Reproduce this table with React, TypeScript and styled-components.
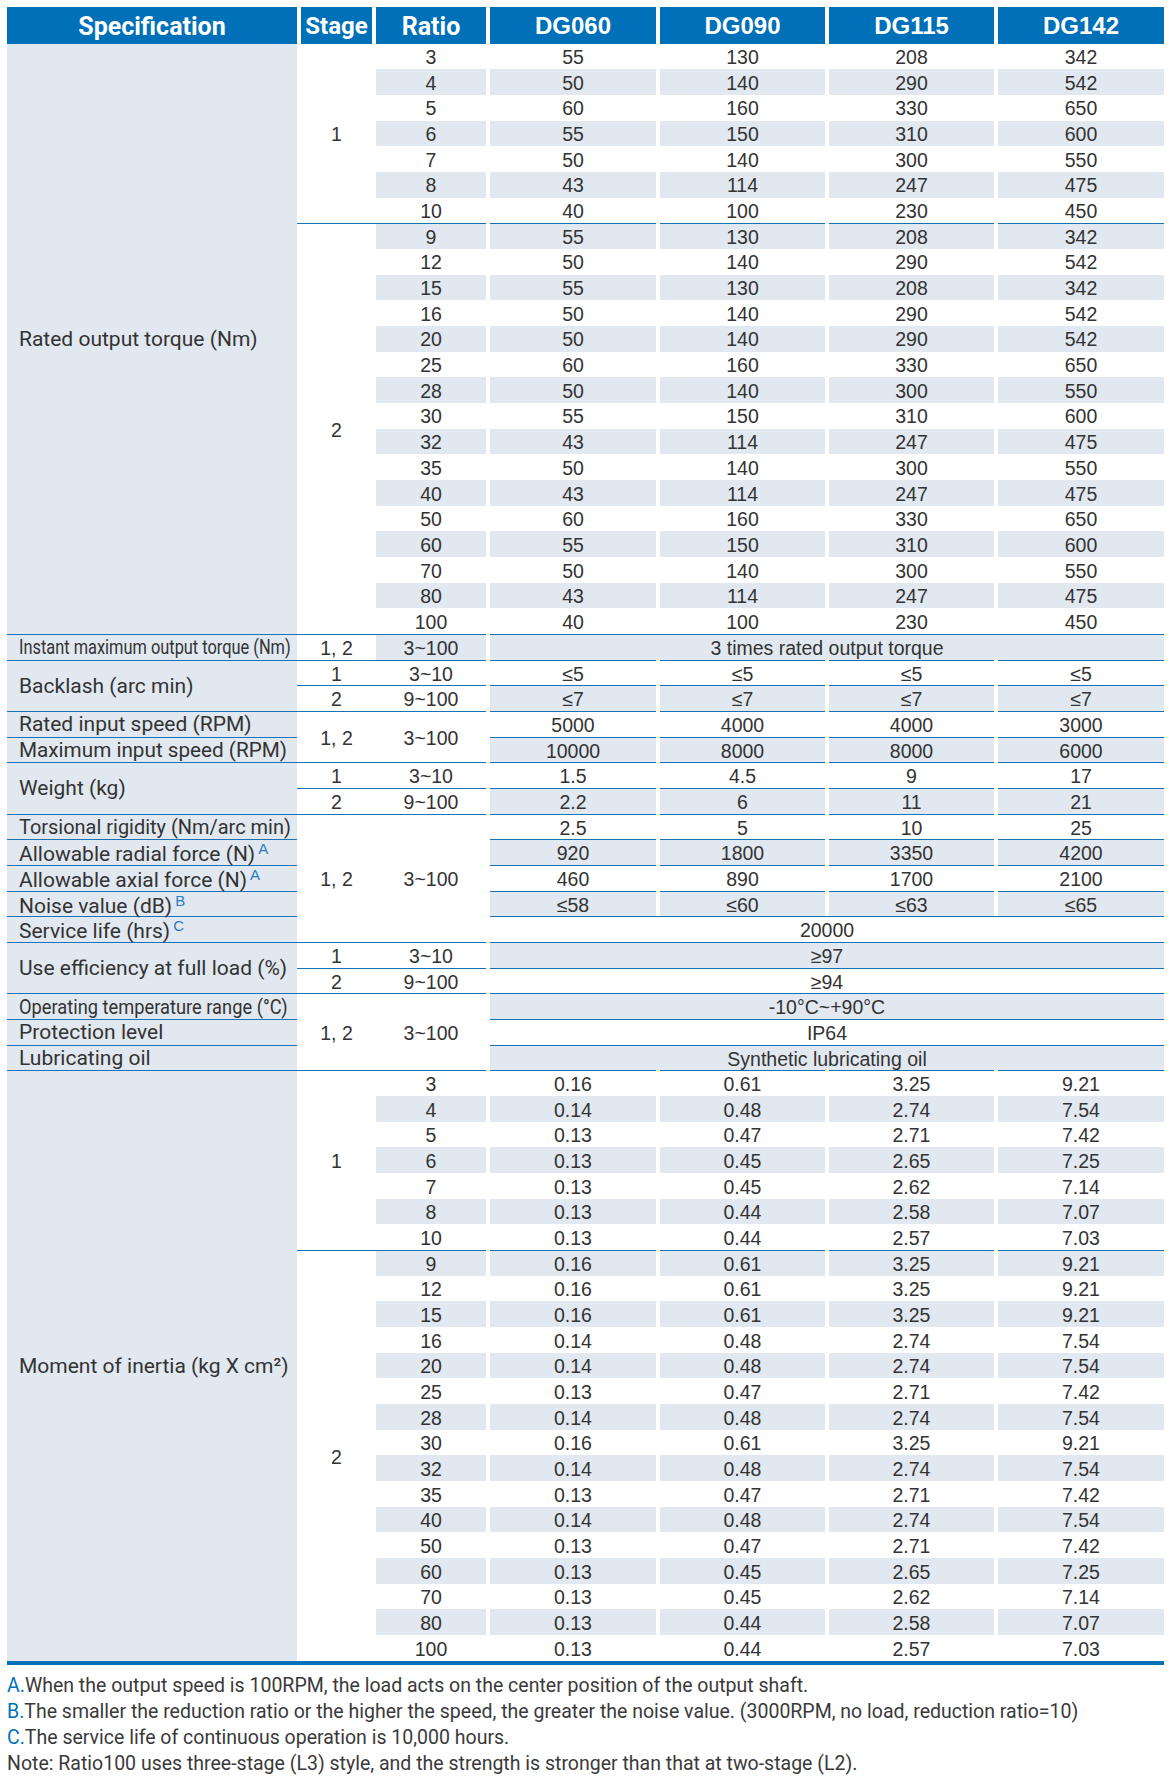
import React from "react";
import styled, { createGlobalStyle } from "styled-components";

const BLUE = "#0070b8";
const LINE = "#1a72b6";
const GREY = "#e1e8ef";
const INK = "#333333";
const SANS = 'Roboto, "Noto Sans", sans-serif';
const ARIAL = '"Liberation Sans", Arial, sans-serif';

const GlobalStyle = createGlobalStyle`
  body {
    margin: 0;
    background: #ffffff;
  }
`;

const Page = styled.div`
  width: 1174px;
  box-sizing: border-box;
  padding: 7px 10px 24px 7px;
`;

const Sheet = styled.div`
  display: grid;
  width: 1157px;
  grid-template-columns: 290px 4px 71px 4px 110px 4px 166px 4px 165px 4px 165px 4px 166px;
  grid-template-rows: 36.5px repeat(63, 25.68px);
`;

const HeadCell = styled.div<{ $col: string; $model?: boolean; $size?: number }>`
  grid-column: ${(p) => p.$col};
  grid-row: 1;
  background: ${BLUE};
  color: #ffffff;
  display: flex;
  align-items: center;
  justify-content: center;
  padding-top: 2px;
  font-family: ${(p) => (p.$model ? ARIAL : SANS)};
  font-weight: 700;
  font-size: ${(p) => p.$size || 24}px;
`;

interface CellProps {
  $col: string;
  $row: number;
  $span?: number;
  $top?: boolean;
  $fill?: boolean;
}

const Cell = styled.div<CellProps>`
  grid-column: ${(p) => p.$col};
  grid-row: ${(p) => `${p.$row + 2} / span ${p.$span || 1}`};
  box-sizing: border-box;
  display: flex;
  align-items: center;
  justify-content: center;
  padding-top: 3px;
  background: ${(p) => (p.$fill ? GREY : "transparent")};
  border-top: ${(p) => (p.$top ? `1px solid ${LINE}` : "none")};
  color: ${INK};
  font-family: ${ARIAL};
  font-size: 19.5px;
  line-height: 1;
  white-space: nowrap;
`;

const SpecCell = styled(Cell)`
  justify-content: flex-start;
  padding-top: 1px;
  padding-left: 12px;
  font-family: ${SANS};
  font-size: 21px;
  background: ${GREY};
`;

const Label = styled.span<{ $squeeze?: number }>`
  display: inline-block;
  transform: scaleX(${(p) => p.$squeeze || 1});
  transform-origin: left center;
`;

const Sup = styled.sup`
  color: #2b7cc3;
  font-family: ${ARIAL};
  font-size: 15px;
  margin-left: 3px;
  vertical-align: 7px;
`;

const BottomRule = styled.div`
  width: 1157px;
  height: 4px;
  background: ${BLUE};
`;

const Notes = styled.div`
  margin-top: 8px;
  font-family: ${SANS};
  font-size: 19.5px;
  line-height: 26px;
  color: #3a3a3a;
`;

const Mark = styled.span`
  color: ${BLUE};
`;

const STAGE = "2 / 5";
const RATIO = "5 / 6";
const dataCol = (i: number) => `${7 + i * 2} / ${8 + i * 2}`;
const MERGED = "7 / 14";

type Group = { stage: string; rows: string[][] };

const torque: Group[] = [
  {
    stage: "1",
    rows: [
      ["3", "55", "130", "208", "342"],
      ["4", "50", "140", "290", "542"],
      ["5", "60", "160", "330", "650"],
      ["6", "55", "150", "310", "600"],
      ["7", "50", "140", "300", "550"],
      ["8", "43", "114", "247", "475"],
      ["10", "40", "100", "230", "450"],
    ],
  },
  {
    stage: "2",
    rows: [
      ["9", "55", "130", "208", "342"],
      ["12", "50", "140", "290", "542"],
      ["15", "55", "130", "208", "342"],
      ["16", "50", "140", "290", "542"],
      ["20", "50", "140", "290", "542"],
      ["25", "60", "160", "330", "650"],
      ["28", "50", "140", "300", "550"],
      ["30", "55", "150", "310", "600"],
      ["32", "43", "114", "247", "475"],
      ["35", "50", "140", "300", "550"],
      ["40", "43", "114", "247", "475"],
      ["50", "60", "160", "330", "650"],
      ["60", "55", "150", "310", "600"],
      ["70", "50", "140", "300", "550"],
      ["80", "43", "114", "247", "475"],
      ["100", "40", "100", "230", "450"],
    ],
  },
];

const inertia: Group[] = [
  {
    stage: "1",
    rows: [
      ["3", "0.16", "0.61", "3.25", "9.21"],
      ["4", "0.14", "0.48", "2.74", "7.54"],
      ["5", "0.13", "0.47", "2.71", "7.42"],
      ["6", "0.13", "0.45", "2.65", "7.25"],
      ["7", "0.13", "0.45", "2.62", "7.14"],
      ["8", "0.13", "0.44", "2.58", "7.07"],
      ["10", "0.13", "0.44", "2.57", "7.03"],
    ],
  },
  {
    stage: "2",
    rows: [
      ["9", "0.16", "0.61", "3.25", "9.21"],
      ["12", "0.16", "0.61", "3.25", "9.21"],
      ["15", "0.16", "0.61", "3.25", "9.21"],
      ["16", "0.14", "0.48", "2.74", "7.54"],
      ["20", "0.14", "0.48", "2.74", "7.54"],
      ["25", "0.13", "0.47", "2.71", "7.42"],
      ["28", "0.14", "0.48", "2.74", "7.54"],
      ["30", "0.16", "0.61", "3.25", "9.21"],
      ["32", "0.14", "0.48", "2.74", "7.54"],
      ["35", "0.13", "0.47", "2.71", "7.42"],
      ["40", "0.14", "0.48", "2.74", "7.54"],
      ["50", "0.13", "0.47", "2.71", "7.42"],
      ["60", "0.13", "0.45", "2.65", "7.25"],
      ["70", "0.13", "0.45", "2.62", "7.14"],
      ["80", "0.13", "0.44", "2.58", "7.07"],
      ["100", "0.13", "0.44", "2.57", "7.03"],
    ],
  },
];

type Spec = { label: string; span: number; sup?: string; squeeze?: number };
type Mid = {
  spec?: Spec;
  stage?: [string, number];
  ratio?: [string, number, boolean?];
  vals?: string[];
  merged?: string;
};

const middle: Mid[] = [
  {
    spec: { label: "Instant maximum output torque (Nm)", span: 1, squeeze: 0.78 },
    stage: ["1, 2", 1],
    ratio: ["3~100", 1, true],
    merged: "3 times rated output torque",
  },
  { spec: { label: "Backlash (arc min)", span: 2 }, stage: ["1", 1], ratio: ["3~10", 1], vals: ["≤5", "≤5", "≤5", "≤5"] },
  { stage: ["2", 1], ratio: ["9~100", 1], vals: ["≤7", "≤7", "≤7", "≤7"] },
  { spec: { label: "Rated input speed (RPM)", span: 1 }, stage: ["1, 2", 2], ratio: ["3~100", 2], vals: ["5000", "4000", "4000", "3000"] },
  { spec: { label: "Maximum input speed (RPM)", span: 1, squeeze: 0.985 }, vals: ["10000", "8000", "8000", "6000"] },
  { spec: { label: "Weight (kg)", span: 2 }, stage: ["1", 1], ratio: ["3~10", 1], vals: ["1.5", "4.5", "9", "17"] },
  { stage: ["2", 1], ratio: ["9~100", 1], vals: ["2.2", "6", "11", "21"] },
  {
    spec: { label: "Torsional rigidity (Nm/arc min)", span: 1, squeeze: 0.95 },
    stage: ["1, 2", 5],
    ratio: ["3~100", 5],
    vals: ["2.5", "5", "10", "25"],
  },
  { spec: { label: "Allowable radial force (N)", span: 1, sup: "A" }, vals: ["920", "1800", "3350", "4200"] },
  { spec: { label: "Allowable axial force (N)", span: 1, sup: "A" }, vals: ["460", "890", "1700", "2100"] },
  { spec: { label: "Noise value (dB)", span: 1, sup: "B" }, vals: ["≤58", "≤60", "≤63", "≤65"] },
  { spec: { label: "Service life (hrs)", span: 1, sup: "C" }, merged: "20000" },
  { spec: { label: "Use efficiency at full load (%)", span: 2 }, stage: ["1", 1], ratio: ["3~10", 1], merged: "≥97" },
  { stage: ["2", 1], ratio: ["9~100", 1], merged: "≥94" },
  {
    spec: { label: "Operating temperature range (°C)", span: 1, squeeze: 0.87 },
    stage: ["1, 2", 3],
    ratio: ["3~100", 3],
    merged: "-10°C~+90°C",
  },
  { spec: { label: "Protection level", span: 1 }, merged: "IP64" },
  { spec: { label: "Lubricating oil", span: 1 }, merged: "Synthetic lubricating oil" },
];

const isFill = (row: number) => row % 2 === 1;

function renderBlock(start: number, label: string, groups: Group[], topLine: boolean) {
  const cells: React.ReactNode[] = [];
  const total = groups.reduce((n, g) => n + g.rows.length, 0);
  cells.push(
    <SpecCell key={`spec-${start}`} $col="1 / 2" $row={start} $span={total} $top={topLine}>
      {label}
    </SpecCell>
  );
  let row = start;
  groups.forEach((g, gi) => {
    const groupTop = gi > 0 || topLine;
    cells.push(
      <Cell key={`stage-${row}`} $col={STAGE} $row={row} $span={g.rows.length} $top={groupTop}>
        {g.stage}
      </Cell>
    );
    g.rows.forEach((r, ri) => {
      const top = ri === 0 && groupTop;
      cells.push(
        <Cell key={`ratio-${row}`} $col={RATIO} $row={row} $top={top} $fill={isFill(row)}>
          {r[0]}
        </Cell>
      );
      r.slice(1).forEach((v, i) => {
        cells.push(
          <Cell key={`d-${row}-${i}`} $col={dataCol(i)} $row={row} $top={top} $fill={isFill(row)}>
            {v}
          </Cell>
        );
      });
      row += 1;
    });
  });
  return cells;
}

function renderMiddle(start: number) {
  const cells: React.ReactNode[] = [];
  middle.forEach((m, idx) => {
    const row = start + idx;
    const fill = isFill(row);
    if (m.spec) {
      cells.push(
        <SpecCell key={`ms-${row}`} $col="1 / 2" $row={row} $span={m.spec.span} $top>
          <Label $squeeze={m.spec.squeeze}>
            {m.spec.label}
            {m.spec.sup && <Sup>{m.spec.sup}</Sup>}
          </Label>
        </SpecCell>
      );
    }
    if (m.stage) {
      cells.push(
        <Cell key={`mst-${row}`} $col={STAGE} $row={row} $span={m.stage[1]} $top>
          {m.stage[0]}
        </Cell>
      );
    }
    if (m.ratio) {
      cells.push(
        <Cell key={`mr-${row}`} $col={RATIO} $row={row} $span={m.ratio[1]} $top $fill={m.ratio[2]}>
          {m.ratio[0]}
        </Cell>
      );
    }
    if (m.merged) {
      cells.push(
        <Cell key={`mm-${row}`} $col={MERGED} $row={row} $top $fill={fill}>
          {m.merged}
        </Cell>
      );
    }
    m.vals?.forEach((v, i) => {
      cells.push(
        <Cell key={`mv-${row}-${i}`} $col={dataCol(i)} $row={row} $top $fill={fill}>
          {v}
        </Cell>
      );
    });
  });
  return cells;
}

const headers = ["DG060", "DG090", "DG115", "DG142"];

export default function App() {
  return (
    <Page>
      <GlobalStyle />
      <Sheet>
        <HeadCell $col="1 / 2" $size={25}>
          Specification
        </HeadCell>
        <HeadCell $col="3 / 4">Stage</HeadCell>
        <HeadCell $col="5 / 6" $size={25}>
          Ratio
        </HeadCell>
        {headers.map((h, i) => (
          <HeadCell key={h} $col={dataCol(i)} $model>
            {h}
          </HeadCell>
        ))}
        {renderBlock(0, "Rated output torque (Nm)", torque, false)}
        {renderMiddle(23)}
        {renderBlock(40, "Moment of inertia (kg X cm²)", inertia, true)}
      </Sheet>
      <BottomRule />
      <Notes>
        <div>
          <Mark>A.</Mark>When the output speed is 100RPM, the load acts on the center position of the output shaft.
        </div>
        <div>
          <Mark>B.</Mark>The smaller the reduction ratio or the higher the speed, the greater the noise value. (3000RPM, no
          load, reduction ratio=10)
        </div>
        <div>
          <Mark>C.</Mark>The service life of continuous operation is 10,000 hours.
        </div>
        <div>Note: Ratio100 uses three-stage (L3) style, and the strength is stronger than that at two-stage (L2).</div>
      </Notes>
    </Page>
  );
}
